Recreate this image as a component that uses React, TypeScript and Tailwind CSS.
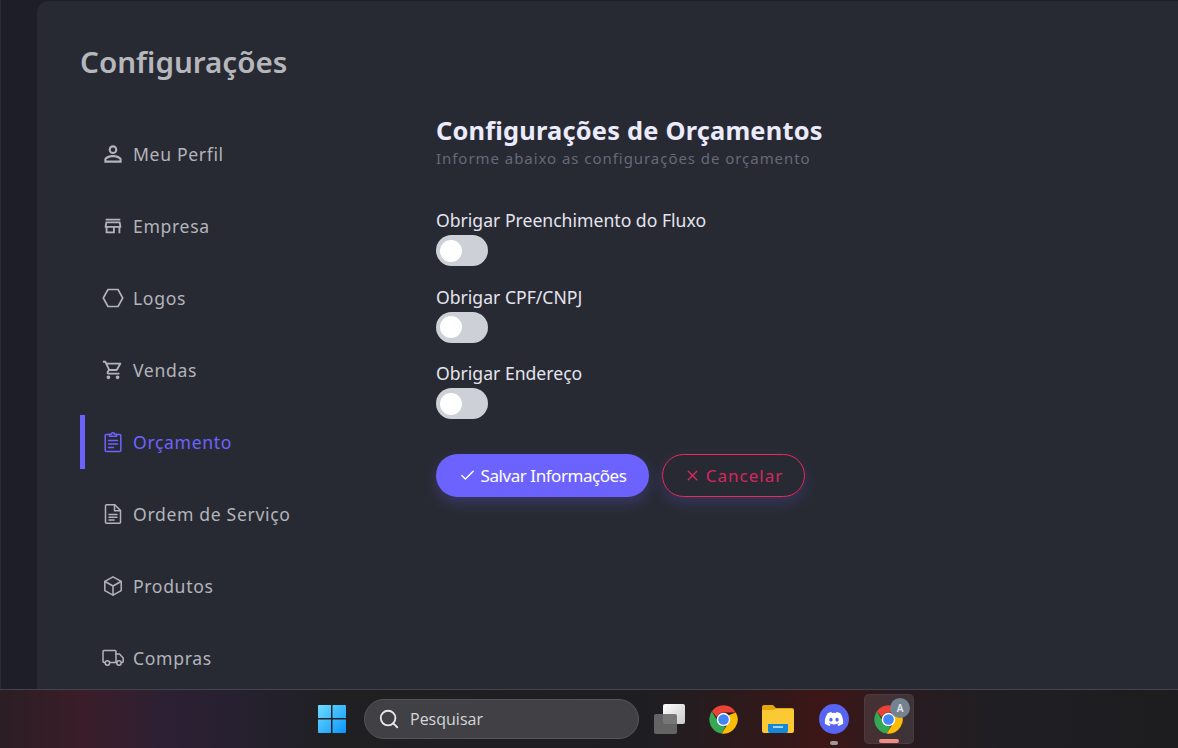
import React from "react";
import { MdOutlinePersonOutline, MdOutlineStore, MdOutlineShoppingCart } from "react-icons/md";
import { LuCheck, LuX, LuSearch } from "react-icons/lu";
import { FaDiscord } from "react-icons/fa";

const Hexagon = () => (
  <svg width="22" height="20" viewBox="0 0 22 20" fill="none" stroke="currentColor" strokeWidth="1.6" strokeLinejoin="round">
    <path d="M6 1.5h10L20.7 10 16 18.5H6L1.3 10z" />
  </svg>
);
const Clipboard = () => (
  <svg width="20" height="22" viewBox="0 0 20 22" fill="none" stroke="currentColor" strokeWidth="1.5" strokeLinejoin="round" strokeLinecap="round">
    <path d="M6.5 3.5H3.2A1 1 0 0 0 2.2 4.5v15a1 1 0 0 0 1 1h13.6a1 1 0 0 0 1-1v-15a1 1 0 0 0-1-1h-3.3" />
    <path d="M6.5 5.2V3.2h2a1.5 1.5 0 0 1 3 0h2v2z" />
    <path d="M5.5 9.5h9M5.5 13h9M5.5 16.5h5" />
  </svg>
);
const Doc = () => (
  <svg width="20" height="22" viewBox="0 0 20 22" fill="none" stroke="currentColor" strokeWidth="1.5" strokeLinejoin="round" strokeLinecap="round">
    <path d="M3.5 1.8h8.3l5.7 5.7v11.7a1 1 0 0 1-1 1h-13a1 1 0 0 1-1-1V2.8a1 1 0 0 1 1-1z" />
    <path d="M11.5 2v5.7h5.8" />
    <path d="M6 11.5h8M6 14.3h8M6 17h5" />
  </svg>
);
const Cube = () => (
  <svg width="20" height="22" viewBox="0 0 20 22" fill="none" stroke="currentColor" strokeWidth="1.5" strokeLinejoin="round" strokeLinecap="round">
    <path d="M10 1.8l8.2 4.6v9.2L10 20.2l-8.2-4.6V6.4z" />
    <path d="M2 6.5l8 4.5 8-4.5M10 11v9" />
  </svg>
);
const Truck = () => (
  <svg width="22" height="18" viewBox="0 0 22 18" fill="none" stroke="currentColor" strokeWidth="1.5" strokeLinejoin="round" strokeLinecap="round">
    <path d="M3.2 13.5H2a1 1 0 0 1-1-1V2.5a1 1 0 0 1 1-1h11a1 1 0 0 1 1 1v11H7.6" />
    <path d="M14 5h3.5l3.7 4v3.5a1 1 0 0 1-1 1H19.6M14.6 13.5H14" />
    <circle cx="5.4" cy="14" r="2.2" />
    <circle cx="17" cy="14" r="2.2" />
  </svg>
);
const Person = () => <MdOutlinePersonOutline size={26} />;
const Store = () => <MdOutlineStore size={22} />;
const Cart = () => <MdOutlineShoppingCart size={22} />;

const nav = [
  { label: "Meu Perfil", Icon: Person },
  { label: "Empresa", Icon: Store },
  { label: "Logos", Icon: Hexagon },
  { label: "Vendas", Icon: Cart },
  { label: "Orçamento", Icon: Clipboard, active: true },
  { label: "Ordem de Serviço", Icon: Doc },
  { label: "Produtos", Icon: Cube },
  { label: "Compras", Icon: Truck },
];

function Toggle() {
  return (
    <div className="w-[52px] h-[31px] rounded-full bg-[#cdd0d6] flex items-center pl-[4px] mt-[3px]">
      <div className="w-[22px] h-[22px] rounded-full bg-white" />
    </div>
  );
}

function Chrome({ size = 30 }: { size?: number }) {
  return (
    <svg width={size} height={size} viewBox="0 0 48 48">
      <path fill="#EA4335" d="M24 2a22 22 0 0 1 19.05 11H24a11 11 0 0 0-10.4 7.4L5.95 11.4A22 22 0 0 1 24 2z" />
      <path fill="#34A853" d="M5.95 11.4l9.5 16.1A10 10 0 0 0 27.6 34.4L21.2 45.8A22 22 0 0 1 5.95 11.4z" />
      <path fill="#FBBC05" d="M43.05 13A22 22 0 0 1 21.2 45.8l9.9-15.6A10 10 0 0 0 31.8 17.5L43.05 13z" />
      <circle cx="24" cy="24" r="10.5" fill="#fff" />
      <circle cx="24" cy="24" r="8.2" fill="#4285F4" />
    </svg>
  );
}

export default function App() {
  return (
    <div
      className="w-[1178px] h-[748px] overflow-hidden flex flex-col bg-[#1d1e28]"
      style={{ fontFamily: '"Noto Sans", sans-serif' }}
    >
      <div className="h-[689px] flex pl-[37px] pt-[1px] border-l border-l-[#2a2b36] overflow-hidden shrink-0">
        <div className="-ml-[1px] flex-1 bg-[#282a33] rounded-tl-[12px] pl-[43px] pt-[41px] overflow-hidden">
          <h1 className="text-[29.6px] leading-[40px] font-semibold text-[#b6b7bc]">Configurações</h1>
          <div className="flex mt-[45px]">
            <nav className="w-[356px] shrink-0 flex flex-col gap-[18px]">
              {nav.map(({ label, Icon, active }) => (
                <div
                  key={label}
                  className={`h-[54px] shrink-0 flex items-center pl-[23px] border-l-[5px] ${
                    active ? "border-l-[#6c63ff] text-[#6c63ff]" : "border-l-transparent text-[#b3b4ba]"
                  }`}
                >
                  <span className="w-[20px] h-[20px] flex items-center justify-center -ml-[5px] mr-[10px] [&>svg]:shrink-0">
                    <Icon />
                  </span>
                  <span className="text-[17.6px] tracking-[0.65px]">{label}</span>
                </div>
              ))}
            </nav>
            <div className="flex-1 -mt-[12px]">
              <h2 className="text-[25.4px] leading-[30px] font-bold text-[#ecebfd] tracking-[0.2px]">
                Configurações de Orçamentos
              </h2>
              <p className="text-[15px] leading-[20px] tracking-[0.95px] text-[#666977] mt-[3px]">
                Informe abaixo as configurações de orçamento
              </p>
              <div className="mt-[41px] flex flex-col gap-[16.5px]">
                {["Obrigar Preenchimento do Fluxo", "Obrigar CPF/CNPJ", "Obrigar Endereço"].map((t) => (
                  <div key={t} className="h-[60px]">
                    <div className="text-[17.6px] leading-[23px] text-[#e4e4ee]">{t}</div>
                    <Toggle />
                  </div>
                ))}
              </div>
              <div className="flex gap-[13px] mt-[32px]">
                <button className="w-[213px] h-[43px] rounded-full bg-[#6c63ff] text-white text-[17px] tracking-[-0.45px] flex items-center justify-center gap-[5px] shadow-[0_6px_14px_rgba(108,99,255,0.25)]">
                  <LuCheck size={17} />
                  Salvar Informações
                </button>
                <button className="w-[143px] h-[43px] rounded-full border border-[#f0265f] text-[#d5285c] text-[17px] tracking-[1px] flex items-center justify-center gap-[5px] shadow-[0_6px_14px_rgba(108,99,255,0.2)]">
                  <LuX size={17} />
                  Cancelar
                </button>
              </div>
            </div>
          </div>
        </div>
      </div>
      <div className="h-[59px] shrink-0 border-t border-t-[#45444c] flex items-center pl-[317px] bg-[linear-gradient(90deg,#2b1e25_0%,#3a1d28_7%,#2d2034_14%,#262030_20%,#202023_28%,#1e1e22_55%,#331819_66%,#3d1616_70%,#2a1b20_76%,#1f1f23_85%,#1d1d20_100%)]">
        <svg width="30" height="30" viewBox="0 0 30 30" className="shrink-0">
          <defs>
            <linearGradient id="w" x1="0" y1="0" x2="1" y2="1">
              <stop offset="0" stopColor="#6fdcff" />
              <stop offset="1" stopColor="#0a94fb" />
            </linearGradient>
          </defs>
          <path fill="url(#w)" d="M2 1h12v13H1V2a1 1 0 0 1 1-1zM15.5 1H28a1 1 0 0 1 1 1v12H15.5zM1 15.5h13V29H2a1 1 0 0 1-1-1zM15.5 15.5H29V28a1 1 0 0 1-1 1H15.5z" />
        </svg>
        <div className="ml-[17px] w-[275px] h-[40px] rounded-full bg-[#414145] border border-[#55555a] flex items-center pl-[13px] text-[#d6d6d8] shrink-0">
          <LuSearch size={22} className="text-[#e8e8e8]" />
          <span className="ml-[10px] text-[16px]" style={{ fontFamily: '"Open Sans", sans-serif' }}>Pesquisar</span>
        </div>
        <div className="ml-[15px] w-[31px] h-[30px] relative shrink-0">
          <div className="absolute right-0 top-0 w-[22px] h-[20px] rounded-[2px] bg-[linear-gradient(135deg,#ffffff,#c9c9c9)]" />
          <div className="absolute left-0 bottom-0 w-[23px] h-[20px] rounded-[2px] bg-[#6b6b6b]/90" />
        </div>
        <div className="ml-[23px] shrink-0"><Chrome size={31} /></div>
        <svg width="32" height="28" viewBox="0 0 32 28" className="ml-[23px] shrink-0">
          <path fill="#e5a50f" d="M0 2a2 2 0 0 1 2-2h9l3 3h16a2 2 0 0 1 2 2v3H0z" />
          <path fill="#fbc934" d="M0 5h11l3-1h16a2 2 0 0 1 2 2v20a2 2 0 0 1-2 2H2a2 2 0 0 1-2-2z" />
          <path fill="#1487d6" d="M6 19h20v7a2 2 0 0 1-2 2H8a2 2 0 0 1-2-2z" />
          <path fill="#9ad3f5" d="M11 21h10v2H11z" />
        </svg>
        <div className="ml-[25px] w-[30px] h-[30px] rounded-full bg-[#5865f2] flex items-center justify-center text-white shrink-0 relative">
          <FaDiscord size={20} />
          <div className="absolute -bottom-[11px] left-[11px] w-[8px] h-[4px] rounded-full bg-[#9e9a9b]" />
        </div>
        <div className="ml-[15px] w-[50px] h-[50px] rounded-[5px] bg-white/10 border border-white/5 flex items-center justify-center relative shrink-0">
          <div className="-ml-[2px]"><Chrome size={31} /></div>
          <div className="absolute top-[3px] right-[3px] w-[20px] h-[20px] rounded-full bg-[#75828f] text-[#e6e9ec] text-[10px] font-semibold flex items-center justify-center">A</div>
          <div className="absolute bottom-[0px] left-[14px] w-[20px] h-[4px] rounded-full bg-[#f28b82]" />
        </div>
      </div>
    </div>
  );
}
